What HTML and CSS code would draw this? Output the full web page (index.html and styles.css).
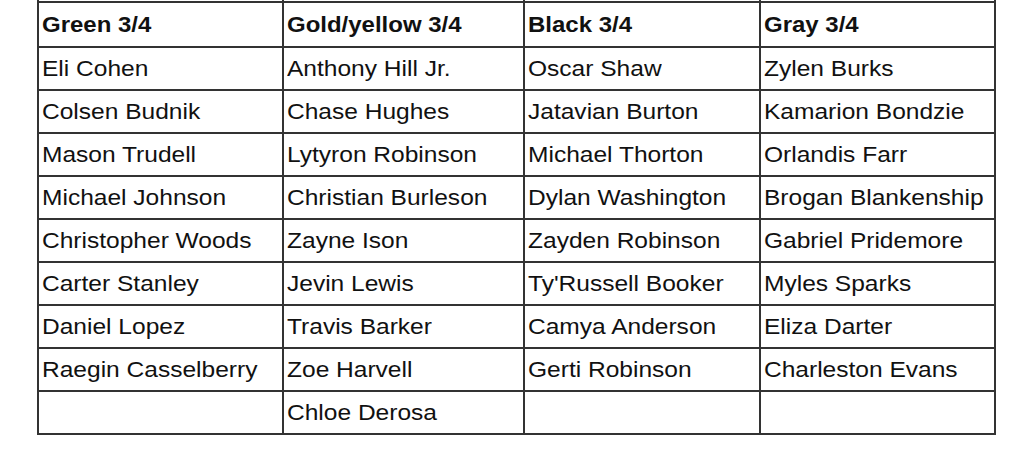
FILE: index.html
```html
<!DOCTYPE html>
<html>
<head>
<meta charset="utf-8">
<link rel="stylesheet" href="styles.css">
</head>
<body>
<table class="roster">
<colgroup>
<col class="c1"><col class="c2"><col class="c3"><col class="c4">
</colgroup>
<tr class="cut"><td></td><td></td><td></td><td></td></tr>
<tr class="head"><th><span class="t">Green 3/4</span></th><th><span class="t">Gold/yellow 3/4</span></th><th><span class="t">Black 3/4</span></th><th><span class="t">Gray 3/4</span></th></tr>
<tr><td><span class="t">Eli Cohen</span></td><td><span class="t">Anthony Hill Jr.</span></td><td><span class="t">Oscar Shaw</span></td><td><span class="t">Zylen Burks</span></td></tr>
<tr><td><span class="t">Colsen Budnik</span></td><td><span class="t">Chase Hughes</span></td><td><span class="t">Jatavian Burton</span></td><td><span class="t">Kamarion Bondzie</span></td></tr>
<tr><td><span class="t">Mason Trudell</span></td><td><span class="t">Lytyron Robinson</span></td><td><span class="t">Michael Thorton</span></td><td><span class="t">Orlandis Farr</span></td></tr>
<tr><td><span class="t">Michael Johnson</span></td><td><span class="t">Christian Burleson</span></td><td><span class="t">Dylan Washington</span></td><td><span class="t">Brogan Blankenship</span></td></tr>
<tr><td><span class="t">Christopher Woods</span></td><td><span class="t">Zayne Ison</span></td><td><span class="t">Zayden Robinson</span></td><td><span class="t">Gabriel Pridemore</span></td></tr>
<tr><td><span class="t">Carter Stanley</span></td><td><span class="t">Jevin Lewis</span></td><td><span class="t">Ty'Russell Booker</span></td><td><span class="t">Myles Sparks</span></td></tr>
<tr><td><span class="t">Daniel Lopez</span></td><td><span class="t">Travis Barker</span></td><td><span class="t">Camya Anderson</span></td><td><span class="t">Eliza Darter</span></td></tr>
<tr><td><span class="t">Raegin Casselberry</span></td><td><span class="t">Zoe Harvell</span></td><td><span class="t">Gerti Robinson</span></td><td><span class="t">Charleston Evans</span></td></tr>
<tr><td></td><td><span class="t">Chloe Derosa</span></td><td></td><td></td></tr>
</table>
</body>
</html>
```
FILE: styles.css
```css
html, body {
  margin: 0;
  padding: 0;
  background: #ffffff;
}
body {
  overflow: hidden;
  height: 463px;
}
.roster {
  border-collapse: collapse;
  margin: -40px 0 0 37px;
  table-layout: fixed;
  width: 957px;
  font-family: "Liberation Sans", Arial, sans-serif;
  font-size: 22px;
  color: #111111;
}
.c1 { width: 245px; }
.c2 { width: 241px; }
.c3 { width: 236px; }
.c4 { width: 235px; }
.roster td, .roster th {
  border: 2px solid #333333;
  height: 43px;
  padding: 0 3px;
  text-align: left;
  vertical-align: middle;
  white-space: nowrap;
  box-sizing: border-box;
}
.roster th {
  font-weight: bold;
}
.t {
  display: inline-block;
  transform-origin: left center;
  transform: scaleX(1.115);
}
.roster th .t {
  transform: scaleX(1.09);
}
.roster tr.cut td {
  height: 42px;
  border-top: none;
}
.roster tr.head th {
  height: 45px;
}
```
